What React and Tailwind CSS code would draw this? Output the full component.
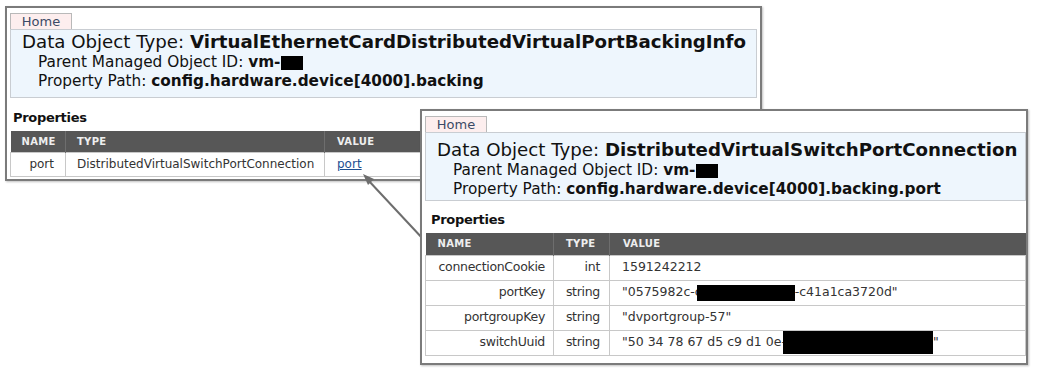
const font = "font-['DejaVu_Sans','Verdana',sans-serif]";

function Redact({ className }) {
  return <span className={`inline-block bg-black align-middle ${className}`} />;
}

function HomeTab() {
  return (
    <div className="flex h-[16px] w-[62px] items-center justify-center border border-b-0 border-[#b9b9b9] bg-[#fdeeee] text-[13px] leading-none text-[#3b4a66]">
      Home
    </div>
  );
}

function Header({ type, path, pad }) {
  return (
    <div className={`border border-[#c9cdd2] bg-[#eef6fd] text-[#111] ${pad}`}>
      <div className="pl-[11px] text-[18.2px] leading-[21px] whitespace-nowrap">
        Data Object Type: <b>{type}</b>
      </div>
      <div className="pl-[27px] text-[15.3px] leading-[20px] whitespace-nowrap">
        Parent Managed Object ID: <b>vm-</b>
        <Redact className="ml-px h-[14px] w-[22px]" />
      </div>
      <div className="pl-[27px] text-[15.3px] leading-[19px] whitespace-nowrap">
        Property Path: <b>{path}</b>
      </div>
    </div>
  );
}

function FirstWindow() {
  return (
    <div className="absolute left-[5px] top-[6px] h-[175px] w-[757px] border-2 border-[#7b7b7b] bg-white px-[3px] pt-[5px] shadow-[1px_1px_2px_rgba(0,0,0,0.25)]">
      <HomeTab />
      <Header
        type="VirtualEthernetCardDistributedVirtualPortBackingInfo"
        path="config.hardware.device[4000].backing"
        pad="pt-px pb-[6px]"
      />
      <div className="mt-[11px] pl-[3px] text-[13px] font-bold leading-[18px] tracking-[-0.3px] text-[#111]">Properties</div>
      <table className="mt-[4px] w-[800px] table-fixed border-collapse text-[12px] text-[#333]">
        <thead>
          <tr className="h-[21px] bg-[#575757] text-left text-[10px] font-bold tracking-[0.3px] text-[#eeeeee]">
            <th className="w-[55px] pl-[11px] font-bold">NAME</th>
            <th className="w-[259px] border-l border-[#6e6e6e] pl-[11px] font-bold">TYPE</th>
            <th className="border-l border-[#6e6e6e] pl-[12px] font-bold">VALUE</th>
          </tr>
        </thead>
        <tbody>
          <tr className="h-[24px]">
            <td className="border border-[#c8c8c8] pr-[11px] text-right">port</td>
            <td className="border border-[#c8c8c8] pl-[11px] whitespace-nowrap">DistributedVirtualSwitchPortConnection</td>
            <td className="border border-[#c8c8c8] pl-[12px]">
              <span className="text-[#1d4f91] underline">port</span>
            </td>
          </tr>
        </tbody>
      </table>
    </div>
  );
}

const rows = [
  { name: "connectionCookie", type: "int", value: <>1591242212</> },
  {
    name: "portKey",
    type: "string",
    value: (
      <>
        "0575982c-c
        <Redact className="-ml-[5px] h-[16px] w-[98px]" />
        -c41a1ca3720d"
      </>
    ),
  },
  { name: "portgroupKey", type: "string", value: <>"dvportgroup-57"</> },
  {
    name: "switchUuid",
    type: "string",
    value: (
      <>
        "50 34 78 67 d5 c9 d1 0e-1
        <Redact className="-ml-[11px] h-[23px] w-[150px]" />
        "
      </>
    ),
  },
];

function SecondWindow() {
  return (
    <div className="absolute left-[420px] top-[109px] h-[256px] w-[608px] border-2 border-[#7b7b7b] bg-white pl-[3px] pt-[5px] shadow-[1px_1px_2px_rgba(0,0,0,0.25)]">
      <HomeTab />
      <Header
        type="DistributedVirtualSwitchPortConnection"
        path="config.hardware.device[4000].backing.port"
        pad="pt-[6px] pb-px"
      />
      <div className="mt-[10px] pl-[6px] text-[13px] font-bold leading-[18px] tracking-[-0.3px] text-[#111]">Properties</div>
      <table className="mt-[4px] w-full table-fixed border-collapse text-[#333]">
        <thead>
          <tr className="h-[22px] bg-[#575757] text-left text-[10px] font-bold tracking-[0.3px] text-[#eeeeee]">
            <th className="w-[128px] pl-[12px] font-bold">NAME</th>
            <th className="w-[56px] border-l border-[#6e6e6e] pl-[12px] font-bold">TYPE</th>
            <th className="border-l border-[#6e6e6e] pl-[13px] font-bold">VALUE</th>
          </tr>
        </thead>
        <tbody>
          {rows.map((row) => (
            <tr key={row.name} className="h-[25px]">
              <td className="border border-[#c8c8c8] pr-[8px] text-right text-[12.5px] tracking-[-0.3px]">{row.name}</td>
              <td className="border border-[#c8c8c8] pr-[9px] text-right text-[12.5px] tracking-[-0.3px]">{row.type}</td>
              <td className="overflow-hidden border border-[#c8c8c8] pl-[12px] text-[12.5px] whitespace-nowrap">{row.value}</td>
            </tr>
          ))}
        </tbody>
      </table>
    </div>
  );
}

export default function App() {
  return (
    <div className={`relative h-[369px] w-[1043px] overflow-hidden bg-white ${font}`}>
      <FirstWindow />
      <svg className="absolute left-0 top-0" width="1043" height="369">
        <line x1="368" y1="180" x2="424" y2="240" stroke="#6d6d6d" strokeWidth="2" />
        <polygon points="363,174 374,179 368,185" fill="#6d6d6d" />
      </svg>
      <SecondWindow />
    </div>
  );
}
